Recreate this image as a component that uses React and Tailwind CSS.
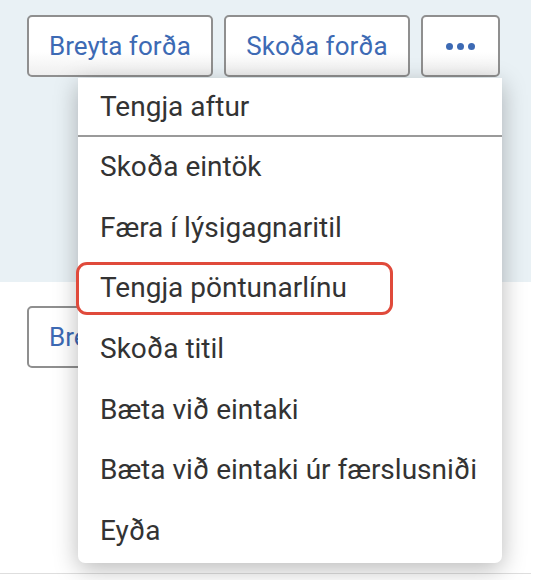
import { useState } from 'react';

const items = [
  'Skoða eintök',
  'Færa í lýsigagnaritil',
  'Tengja pöntunarlínu',
  'Skoða titil',
  'Bæta við eintaki',
  'Bæta við eintaki úr færslusniði',
  'Eyða',
];

function Btn({ children, className = '' }) {
  return (
    <button
      type="button"
      className={`flex h-[62px] items-center justify-center rounded-[5px] border-2 border-[#8f8f8f] bg-gradient-to-b from-white from-60% to-[#efefef] text-[26px] text-[#3d6ab4] ${className}`}
    >
      {children}
    </button>
  );
}

export default function App() {
  const [open] = useState(true);

  return (
    <main className="relative h-[580px] w-[542px] overflow-hidden bg-white font-['Roboto',sans-serif]">
      <div className="w-[531px]">
        <section className="h-[282px] bg-[#e9f1f5] pl-[27px] pt-[15px]">
          <div className="flex gap-[11px]">
            <Btn className="w-[186px]">Breyta forða</Btn>
            <Btn className="w-[186px]">Skoða forða</Btn>
            <Btn className="w-[79px]">
              <span className="flex gap-[4px]">
                <span className="h-[7px] w-[7px] rounded-full bg-[#3d6ab4]" />
                <span className="h-[7px] w-[7px] rounded-full bg-[#3d6ab4]" />
                <span className="h-[7px] w-[7px] rounded-full bg-[#3d6ab4]" />
              </span>
            </Btn>
          </div>
        </section>

        <section className="h-[292px] border-b border-[#dedede] pl-[27px] pt-[24px]">
          <Btn className="w-[186px] bg-none bg-white">Breyta forða</Btn>
        </section>
      </div>

      {open && (
        <div className="absolute left-[78px] top-[78px] w-[424px] rounded-b-[7px] bg-white pb-[2px] text-[28px] text-[#333333] shadow-[0_6px_24px_rgba(0,0,0,0.28)]">
          <div className="flex h-[59px] items-center border-b-2 border-[#9a9a9a] pl-[22px]">
            Tengja aftur
          </div>
          {items.map((item) => (
            <div key={item} className="flex h-[60.6px] items-center pl-[22px]">
              {item}
            </div>
          ))}
        </div>
      )}

      <div className="absolute left-[76px] top-[262px] h-[53px] w-[317px] rounded-[11px] border-[3px] border-[#e04a3b]" />
    </main>
  );
}
